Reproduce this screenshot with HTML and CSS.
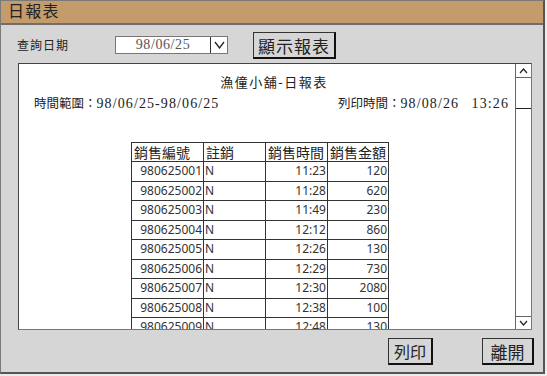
FILE: index.html
```html
<!DOCTYPE html>
<html lang="zh-Hant">
<head>
    <meta charset="UTF-8">
    <title>日報表</title>
    <link rel="stylesheet" href="styles.css">
</head>
<body>
    <!-- 視窗 -->
    <div class="window">
        <div class="titlebar">日報表</div>
        <!-- 查詢列 -->
        <div class="query">
            <span class="query-label">查詢日期</span>
            <div class="datebox">
                <span class="date-value">98/06/25</span>
                <span class="date-drop">
                    <svg width="11" height="8" viewBox="0 0 11 8"><polyline points="1,1 5.5,7 10,1" fill="none" stroke="#222" stroke-width="1.3"/></svg>
                </span>
            </div>
            <button class="btn btn-show">顯示報表</button>
        </div>
        <!-- 報表區 -->
        <div class="panel">
            <div class="report">
                <div class="report-title">漁僮小舖-日報表</div>
                <div class="report-meta">
                    <span>時間範圍：<span class="num">98/06/25-98/06/25</span></span>
                    <span>列印時間：<span class="num">98/08/26</span>　<span class="num">13:26</span></span>
                </div>
                <table class="sales">
                    <tr>
                        <th class="c1">銷售編號</th>
                        <th class="c2">註銷</th>
                        <th class="c3">銷售時間</th>
                        <th class="c4">銷售金額</th>
                    </tr>
                    <tr><td>980625001</td><td class="l">N</td><td>11:23</td><td>120</td></tr>
                    <tr><td>980625002</td><td class="l">N</td><td>11:28</td><td>620</td></tr>
                    <tr><td>980625003</td><td class="l">N</td><td>11:49</td><td>230</td></tr>
                    <tr><td>980625004</td><td class="l">N</td><td>12:12</td><td>860</td></tr>
                    <tr><td>980625005</td><td class="l">N</td><td>12:26</td><td>130</td></tr>
                    <tr><td>980625006</td><td class="l">N</td><td>12:29</td><td>730</td></tr>
                    <tr><td>980625007</td><td class="l">N</td><td>12:30</td><td>2080</td></tr>
                    <tr><td>980625008</td><td class="l">N</td><td>12:38</td><td>100</td></tr>
                    <tr><td>980625009</td><td class="l">N</td><td>12:48</td><td>130</td></tr>
                </table>
            </div>
            <!-- 捲軸 -->
            <div class="vscroll">
                <div class="vs-up">
                    <svg width="9" height="6" viewBox="0 0 9 6"><polyline points="1,5 4.5,1 8,5" fill="none" stroke="#222" stroke-width="1.2"/></svg>
                </div>
                <div class="vs-thumb"></div>
                <div class="vs-track"></div>
                <div class="vs-down">
                    <svg width="9" height="6" viewBox="0 0 9 6"><polyline points="1,1 4.5,5 8,1" fill="none" stroke="#222" stroke-width="1.2"/></svg>
                </div>
            </div>
        </div>
        <!-- 按鈕列 -->
        <div class="actions">
            <button class="btn btn-print">列印</button>
            <button class="btn btn-exit">離開</button>
        </div>
    </div>
</body>
</html>
```

FILE: styles.css
```css
html, body {
    margin: 0;
    padding: 0;
    background: #ececec;
}
body {
    font-family: "Liberation Serif", "Noto Sans CJK TC", serif;
    color: #222;
}
.window {
    box-sizing: border-box;
    width: 545px;
    height: 374px;
    background: #d6d6d6;
    border: 1px solid #7a7a7a;
    border-right: 2px solid #555;
    border-bottom: 2px solid #555;
}
.titlebar {
    height: 22px;
    line-height: 22px;
    padding-left: 7px;
    background: #c49c6c;
    border-bottom: 2px solid #6e6e6e;
    font-size: 16px;
    letter-spacing: 1.3px;
}
.query {
    display: flex;
    align-items: center;
    height: 26px;
    margin-top: 7px;
    padding-left: 16px;
}
.query-label {
    width: 98px;
    font-size: 12px;
    letter-spacing: 1px;
}
.datebox {
    box-sizing: border-box;
    display: flex;
    width: 113px;
    height: 18px;
    background: #fff;
    border: 1px solid #777;
}
.date-value {
    flex: 1;
    text-align: center;
    font-size: 14px;
    line-height: 16px;
    color: #555;
    letter-spacing: 0.6px;
}
.date-drop {
    width: 16px;
    border-left: 1px solid #333;
    display: flex;
    align-items: center;
    justify-content: center;
}
.btn {
    box-sizing: border-box;
    height: 27px;
    padding: 0;
    background: #d6d6d6;
    border: 1px solid #333;
    border-right: 2px solid #111;
    border-bottom: 2px solid #111;
    font-family: "Noto Sans CJK TC", sans-serif;
    color: #222;
}
.btn-show {
    margin-left: 25px;
    width: 83px;
    font-size: 17px;
    letter-spacing: 1px;
}
.panel {
    box-sizing: border-box;
    display: flex;
    width: 514px;
    height: 267px;
    margin: 5px 0 0 17px;
    background: #fff;
    border: 1px solid #444;
    border-right-color: #777;
    border-bottom-color: #777;
    overflow: hidden;
}
.report {
    flex: 1;
    overflow: hidden;
    padding-top: 11px;
}
.report-title {
    text-align: center;
    padding-left: 14px;
    font-size: 13px;
    line-height: 16px;
    letter-spacing: 1.5px;
}
.report-meta {
    display: flex;
    justify-content: space-between;
    margin-top: 5px;
    padding: 0 6px 0 15px;
    font-size: 12.5px;
    line-height: 16px;
}
.report-meta .num {
    font-size: 14px;
    letter-spacing: 1.1px;
}
.sales {
    margin: 30px 0 0 112px;
    border-collapse: collapse;
    border: 1px solid #333;
    font-family: "Noto Sans", sans-serif;
    font-size: 12px;
    color: #333;
}
.sales th {
    height: 18px;
    padding: 0 2px;
    border: 1px solid #333;
    text-align: left;
    font-family: "Noto Sans CJK TC", sans-serif;
    font-weight: normal;
    font-size: 14px;
    line-height: 16px;
    color: #222;
}
.sales td {
    height: 18.5px;
    padding: 0 1px;
    border: 1px solid #333;
    text-align: right;
    line-height: 18px;
}
.sales td.l {
    text-align: left;
}
.sales .c1 { width: 67px; }
.sales .c2 { width: 57px; }
.sales .c3 { width: 57px; }
.sales .c4 { width: 56px; }
.vscroll {
    display: flex;
    flex-direction: column;
    width: 15px;
    border-left: 1px solid #666;
}
.vs-up {
    height: 13px;
    border-bottom: 1px solid #666;
    display: flex;
    align-items: center;
    justify-content: center;
}
.vs-thumb {
    height: 30px;
    border-bottom: 1px solid #222;
}
.vs-track {
    flex: 1;
}
.vs-down {
    height: 12px;
    border-top: 1px solid #666;
    display: flex;
    align-items: center;
    justify-content: center;
}
.actions {
    display: flex;
    justify-content: flex-end;
    gap: 49px;
    margin-top: 8px;
    padding-right: 9px;
}
.btn-print {
    width: 45px;
    font-size: 16px;
}
.btn-exit {
    width: 52px;
    font-size: 17px;
}
```
